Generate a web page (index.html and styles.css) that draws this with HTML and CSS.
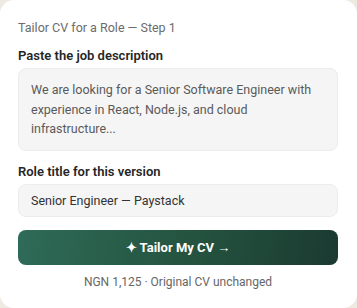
FILE: index.html
```html
<!DOCTYPE html>
<html lang="en">
<head>
<meta charset="utf-8">
<title>Tailor CV</title>
<link rel="stylesheet" href="styles.css">
</head>
<body>
<div class="card">
  <div class="step">Tailor CV for a Role — Step 1</div>
  <div class="field">
    <div class="label">Paste the job description</div>
    <div class="textarea">We are looking for a Senior Software Engineer with experience in React, Node.js, and cloud infrastructure...</div>
  </div>
  <div class="field">
    <div class="label">Role title for this version</div>
    <div class="input">Senior Engineer — Paystack</div>
  </div>
  <button class="cta">✦ Tailor My CV →</button>
  <div class="note">NGN 1,125 · Original CV unchanged</div>
</div>
</body>
</html>
```
FILE: styles.css
```css
html, body {
  margin: 0;
  padding: 0;
  background: #efeae1;
}
body {
  font-family: Roboto, "Noto Sans", sans-serif;
  width: 357px;
  height: 308px;
  overflow: hidden;
}
.card {
  box-sizing: border-box;
  width: 357px;
  height: 308px;
  background: #ffffff;
  border-radius: 14px;
  padding: 18px 19px 0 18px;
  display: flex;
  flex-direction: column;
}
.step {
  font-size: 12.5px;
  line-height: 16px;
  color: #6b6b6b;
  margin-top: 2px;
}
.field {
  display: flex;
  flex-direction: column;
}
.label {
  font-size: 13px;
  line-height: 16px;
  font-weight: 600;
  color: #262626;
  margin-top: 12px;
  margin-bottom: 4px;
}
.field + .field .label {
  margin-top: 13px;
}
.textarea {
  box-sizing: border-box;
  height: 83px;
  background: #f5f5f5;
  border: 1px solid #ececec;
  border-radius: 8px;
  padding: 11px 12px;
  font-size: 12.5px;
  line-height: 19.5px;
  color: #5a5a5a;
}
.input {
  box-sizing: border-box;
  height: 33px;
  background: #f5f5f5;
  border: 1px solid #ececec;
  border-radius: 8px;
  padding: 0 12px;
  font-size: 12.5px;
  line-height: 31px;
  color: #333333;
}
.cta {
  margin-top: 13px;
  height: 35px;
  border: none;
  border-radius: 8px;
  background: linear-gradient(100deg, #2e6b58 0%, #24533f 55%, #1b3a31 100%);
  color: #ffffff;
  font-family: inherit;
  font-size: 13px;
  font-weight: 700;
  padding: 0;
  cursor: pointer;
}
.note {
  margin-top: 9px;
  text-align: center;
  font-size: 12px;
  line-height: 16px;
  color: #666666;
}
```
